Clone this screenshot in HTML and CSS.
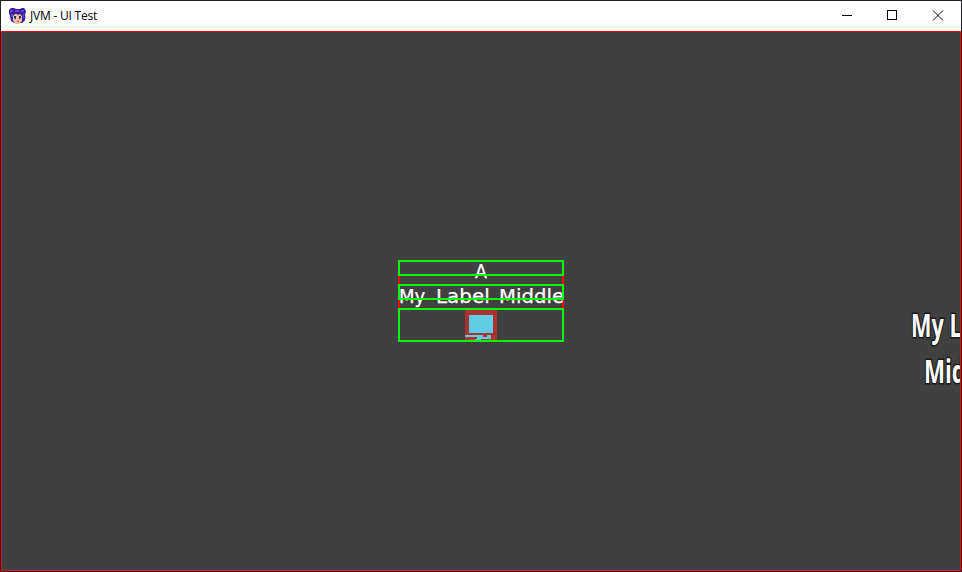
FILE: index.html
```html
<!DOCTYPE html>
<html lang="en"><head><meta charset="utf-8"><title>JVM - UI Test</title><link rel="stylesheet" href="styles.css"></head>
<body><div class="window">
<header class="titlebar">
<svg class="app-icon" width="17" height="17" viewBox="0 0 17 17"><circle cx="10.500" cy="9" r="6" fill="#c8206c"/><path fill="#35219b" d="M0 2l2-2h3l2 1h4l2-1h2l2 3-1 4v5l-3 3H5l-3-2-1-5-1-3z"/><path fill="#6344d8" d="M1 2h3v2H1zM6 2h4v2H6zM12 2h3v2h-3zM2 6h2v3H2zM14 6h1v4h-1z"/><path fill="#f3bd9c" d="M4 8l2-2h2l1 1 2-1 2 2v5l-3 3H7l-3-3z"/><path fill="#302b60" d="M5 8h2v3H5zM10 8h2v3h-2z"/><path fill="#74b5e2" d="M5 10h1v1H5zM11 10h1v1h-1z"/><path fill="#b5445a" d="M8 13h2v1H8z"/></svg>
<span class="title">JVM - UI Test</span>
<svg class="controls" width="138" height="30" viewBox="0 0 138 30" fill="none" stroke="#000" shape-rendering="crispEdges"><path d="M19 14.500h10M64.500 9.500h9v9h-9z"/><path shape-rendering="auto" d="M110 9.500l10 10M120 9.500l-10 10"/></svg>
</header>
<main class="stage">
<section class="stack">
<div class="cell short"><svg class="pixel" width="162" height="12"><text x="75" y="16" textLength="12" lengthAdjust="spacingAndGlyphs">A</text></svg></div>
<div class="cell short"><svg class="pixel" width="162" height="12"><text y="17"><tspan x="-1" textLength="32" lengthAdjust="spacingAndGlyphs">My </tspan><tspan x="36" textLength="60" lengthAdjust="spacingAndGlyphs">Label </tspan><tspan x="99" textLength="65" lengthAdjust="spacingAndGlyphs">Middle</tspan></text></svg></div>
<div class="cell picture"><svg width="32" height="30" viewBox="0 0 32 30" shape-rendering="crispEdges"><path fill="#ac3232" d="M0 0h32v30H0z"/><path fill="#5fcde4" d="M4 5h24v18H4zM0 25h18v2H0zM22 25h4v4H12v-2h10zM10 29h6v1h-6z"/></svg></div>
</section>
<aside class="side"><svg width="49" height="92"><text x="0" y="27" textLength="97" lengthAdjust="spacingAndGlyphs">My Label</text><text x="13" y="73" textLength="76" lengthAdjust="spacingAndGlyphs">Middle</text></svg></aside>
</main></div></body></html>
```
FILE: styles.css
```css
*{box-sizing:border-box}
body{margin:0;background:#202024;overflow:hidden}
.window{width:962px;height:572px;border:1px solid #202024;display:flex;flex-direction:column}
.titlebar{height:30px;flex:none;background:#fff;display:flex;align-items:center;padding-left:8px;font:12px "Open Sans",sans-serif;color:#000}
.title{margin-left:4px;letter-spacing:-.22px;line-height:16px}
.controls{margin-left:auto}
.stage{flex:1;min-height:0;background:#404040;border:1px solid red;display:grid;grid-template-columns:396px 166px 347px 1fr;overflow:hidden}
.stack{grid-column:2;margin-top:228px;height:82px;display:flex;flex-direction:column;justify-content:space-between;border:solid red;border-width:0 2px;position:relative;z-index:0}
.cell{margin:0 -2px;border:2px solid #0f0}
.short{height:16px}
.picture{height:34px;display:flex;justify-content:center}
.pixel{display:block;overflow:visible;fill:#fff;stroke:#fff;stroke-width:.25px;font:19px "DejaVu Sans",sans-serif;position:relative;z-index:-1}
.side{grid-column:4;margin-top:278px;width:49px;overflow:hidden}
.side svg{display:block;fill:#fff;stroke:#181818;stroke-width:3px;paint-order:stroke;font:bold 33px "Open Sans",sans-serif;overflow:visible}
```
